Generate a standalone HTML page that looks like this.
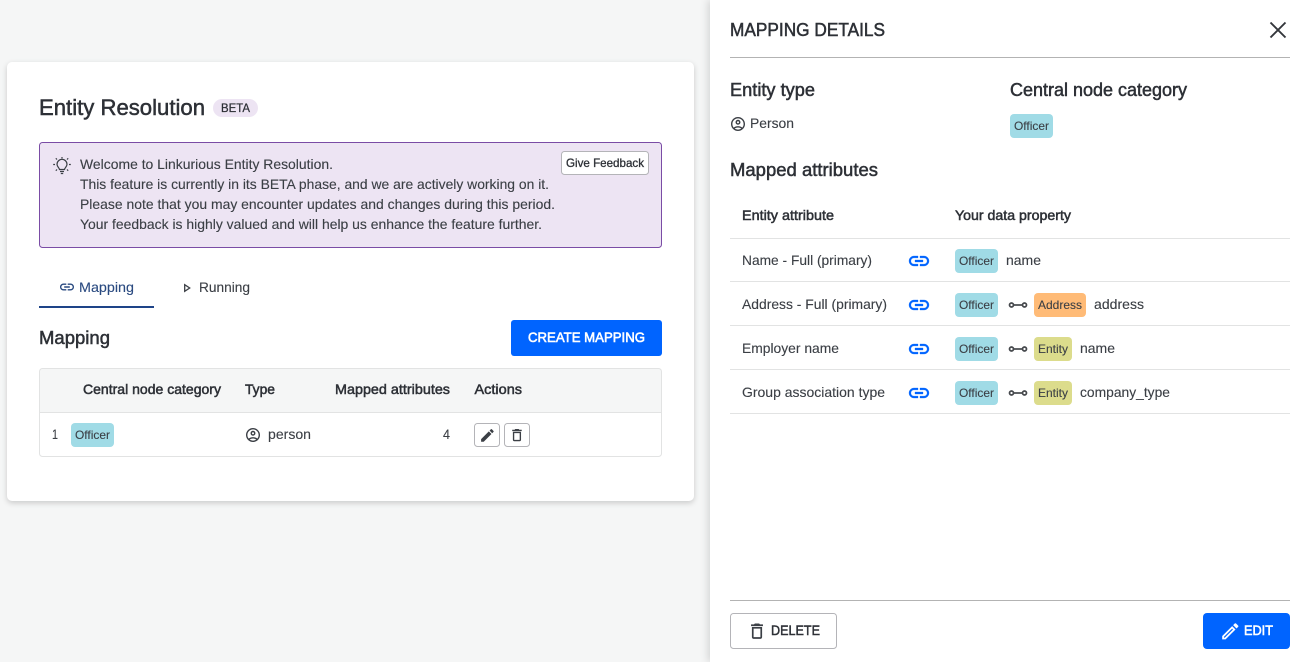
<!DOCTYPE html>
<html><head><meta charset="utf-8"><title>Entity Resolution</title>
<style>
html,body{margin:0;padding:0;width:1307px;height:662px;overflow:hidden;background:#f5f6f6}
#card{position:absolute;left:7px;top:62px;width:687px;height:439px;background:#fff;border-radius:5px;box-shadow:0 2px 6px rgba(0,0,0,.18)}
#panel{position:absolute;left:710px;top:0;width:597px;height:662px;background:#fff;box-shadow:-2px 0 8px rgba(0,0,0,.14)}
svg{position:absolute;left:0;top:0}
text{font-family:"Liberation Sans",sans-serif;font-size:14px;fill:#3b3f45;stroke:#3b3f45;stroke-width:.12px}
text.m{stroke:#2d3036;stroke-width:.5px;fill:#2d3036}
text.h{font-size:18px}
text.c{font-size:12px;fill:#3b3f45;stroke:#3b3f45;stroke-width:.1px}
text.w{fill:#fff;stroke:#fff;stroke-width:.6px}
</style></head><body>
<div id="card"></div><div id="panel"></div>
<svg width="1307" height="662" viewBox="0 0 1307 662" xmlns="http://www.w3.org/2000/svg">
<defs>
<path id="link" d="M3.9 12c0-1.71 1.39-3.1 3.1-3.1h4V7H7c-2.76 0-5 2.24-5 5s2.24 5 5 5h4v-1.9H7c-1.71 0-3.1-1.39-3.1-3.1zM8 13h8v-2H8v2zm9-6h-4v1.9h4c1.71 0 3.1 1.39 3.1 3.1s-1.39 3.1-3.1 3.1h-4V17h4c2.76 0 5-2.24 5-5s-2.24-5-5-5z"/>
<path id="person" d="M12 2C6.48 2 2 6.48 2 12s4.48 10 10 10 10-4.48 10-10S17.52 2 12 2zM7.35 18.5C8.66 17.56 10.26 17 12 17s3.34.56 4.65 1.5C15.34 19.44 13.74 20 12 20s-3.34-.56-4.65-1.5zm10.79-1.38C16.45 15.8 14.32 15 12 15s-4.45.8-6.14 2.12C4.7 15.73 4 13.95 4 12c0-4.42 3.58-8 8-8s8 3.58 8 8c0 1.95-.7 3.73-1.86 5.12zM12 6c-1.93 0-3.5 1.57-3.5 3.5S10.07 13 12 13s3.5-1.57 3.5-3.5S13.93 6 12 6zm0 5c-.83 0-1.5-.67-1.5-1.5S11.17 8 12 8s1.5.67 1.5 1.5S12.83 11 12 11z"/>
<path id="trash" d="M16 9v10H8V9h8m-1.5-6h-5l-1 1H5v2h14V4h-3.5l-1-1zM18 7H6v12c0 1.1.9 2 2 2h8c1.1 0 2-.9 2-2V7z"/>
<g id="conn" fill="none" stroke="#45484c" stroke-width="1.7"><circle cx="2.5" cy="0" r="2"/><circle cx="15.5" cy="0" r="2"/><path d="M4.5 0h9"/></g>
</defs>

<!-- Title -->
<text class="m" x="39" y="115" style="font-size:22px" textLength="166" lengthAdjust="spacingAndGlyphs">Entity Resolution</text>
<rect x="213" y="99" width="45" height="18" rx="9" fill="#ede4f3"/>
<text class="m" x="221" y="112" style="font-size:12px;stroke-width:.25px" textLength="29" lengthAdjust="spacingAndGlyphs">BETA</text>

<!-- Alert -->
<rect x="39.5" y="142.5" width="622" height="105" rx="3" fill="#ede4f3" stroke="#7a4ca5"/>
<g fill="none" stroke="#3b3f45" stroke-width="1.2">
<path d="M59.5 169.5c0-1.6-2.5-2.5-2.5-5.2a5 5 0 0 1 10 0c0 2.700-2.500 3.600-2.500 5.200z"/>
<path d="M60 171.500h4M60.800 173.500h2.400"/>
<path d="M62 157v1.500M55 164.500h-1.800M70.800 164.500H69M57 159.500l-1.200-1.200M67 159.500l1.200-1.200M57 169.500l-1.200 1.200M67 169.500l1.200 1.200"/>
</g>
<text x="80" y="169" textLength="253" lengthAdjust="spacingAndGlyphs">Welcome to Linkurious Entity Resolution.</text>
<text x="80" y="189" textLength="469" lengthAdjust="spacingAndGlyphs">This feature is currently in its BETA phase, and we are actively working on it.</text>
<text x="80" y="209" textLength="475" lengthAdjust="spacingAndGlyphs">Please note that you may encounter updates and changes during this period.</text>
<text x="80" y="229" textLength="462" lengthAdjust="spacingAndGlyphs">Your feedback is highly valued and will help us enhance the feature further.</text>
<rect x="561.5" y="151.5" width="87" height="23" rx="3" fill="#fff" stroke="#b4b4b8"/>
<text class="m" x="566" y="167" style="font-size:12px;stroke-width:.3px" textLength="78" lengthAdjust="spacingAndGlyphs">Give Feedback</text>

<!-- Tabs -->
<use href="#link" transform="translate(58.600 278.600) scale(.7)" fill="#2a4a80"/>
<text x="79" y="292" style="fill:#2a4a80;stroke:#2a4a80" textLength="55" lengthAdjust="spacingAndGlyphs">Mapping</text>
<rect x="39" y="306" width="115" height="2" fill="#1e4488"/>
<path d="M184.700 284.700v6.600l5-3.300z" fill="none" stroke="#3b3f45" stroke-width="1.300"/>
<text x="199" y="292" textLength="51" lengthAdjust="spacingAndGlyphs">Running</text>

<!-- Mapping section -->
<text class="m h" x="39" y="344" textLength="71" lengthAdjust="spacingAndGlyphs">Mapping</text>
<rect x="511" y="320" width="151" height="36" rx="3" fill="#0064ff"/>
<text class="w" x="528" y="342" textLength="117" lengthAdjust="spacingAndGlyphs">CREATE MAPPING</text>

<!-- Table -->
<path d="M42.500 368.500h616a3 3 0 0 1 3 3v41h-622v-41a3 3 0 0 1 3-3z" fill="#f5f6f6"/>
<rect x="39.500" y="368.500" width="622" height="88" rx="3" fill="none" stroke="#e2e3e3"/>
<path d="M39.500 412.500h622" stroke="#e2e3e3"/>
<text class="m" x="83" y="394" textLength="138" lengthAdjust="spacingAndGlyphs">Central node category</text>
<text class="m" x="245" y="394" textLength="30" lengthAdjust="spacingAndGlyphs">Type</text>
<text class="m" x="335" y="394" textLength="115" lengthAdjust="spacingAndGlyphs">Mapped attributes</text>
<text class="m" x="474.500" y="394" textLength="47.500" lengthAdjust="spacingAndGlyphs">Actions</text>
<text x="52" y="439" textLength="6" lengthAdjust="spacingAndGlyphs">1</text>
<rect x="71" y="423" width="43" height="24" rx="4" fill="#a0dbe6"/>
<text class="c" x="75" y="439" textLength="35" lengthAdjust="spacingAndGlyphs">Officer</text>
<use href="#person" transform="translate(244.600 426.600) scale(.7)" fill="#3b3f45"/>
<text x="268" y="439" textLength="43" lengthAdjust="spacingAndGlyphs">person</text>
<text x="443" y="439" textLength="7" lengthAdjust="spacingAndGlyphs">4</text>
<rect x="474.500" y="423.500" width="25" height="23" rx="3" fill="#fff" stroke="#b4b4b8"/>
<path transform="translate(479 427) scale(.7)" fill="#3b3f45" d="M3 17.250V21h3.750L17.810 9.940l-3.750-3.750L3 17.250zM20.710 7.040c.39-.39.39-1.020 0-1.410l-2.340-2.340c-.39-.39-1.020-.39-1.410 0l-1.830 1.830 3.750 3.750 1.830-1.830z"/>
<rect x="504.500" y="423.500" width="25" height="23" rx="3" fill="#fff" stroke="#b4b4b8"/>
<use href="#trash" transform="translate(508.800 427) scale(.68)" fill="#3b3f45"/>

<!-- Panel header -->
<text class="m h" x="730" y="36" textLength="155" lengthAdjust="spacingAndGlyphs">MAPPING DETAILS</text>
<path d="M1270.500 22.500l15 15M1285.500 22.500l-15 15" stroke="#33363b" stroke-width="1.900" fill="none"/>
<path d="M730 57.500h560" stroke="#b3b3b3"/>
<text class="m h" x="730" y="96" textLength="85" lengthAdjust="spacingAndGlyphs">Entity type</text>
<text class="m h" x="1010" y="96" textLength="177" lengthAdjust="spacingAndGlyphs">Central node category</text>
<use href="#person" transform="translate(729.600 115.600) scale(.7)" fill="#3b3f45"/>
<text x="750" y="128" textLength="44" lengthAdjust="spacingAndGlyphs">Person</text>
<rect x="1010" y="114" width="43" height="24" rx="4" fill="#a0dbe6"/>
<text class="c" x="1014" y="130" textLength="35" lengthAdjust="spacingAndGlyphs">Officer</text>
<text class="m h" x="730" y="176" textLength="148" lengthAdjust="spacingAndGlyphs">Mapped attributes</text>

<!-- Attributes table -->
<text class="m" x="742" y="220" textLength="92" lengthAdjust="spacingAndGlyphs">Entity attribute</text>
<text class="m" x="955" y="220" textLength="116" lengthAdjust="spacingAndGlyphs">Your data property</text>
<path d="M730 238.500h560M730 281.500h560M730 325.500h560M730 369.500h560M730 413.500h560" stroke="#e2e3e3"/>

<text x="742" y="265" textLength="130" lengthAdjust="spacingAndGlyphs">Name - Full (primary)</text>
<use href="#link" transform="translate(907 249)" fill="#0064ff" stroke="#0064ff" stroke-width=".3"/>
<rect x="955" y="249" width="43" height="24" rx="4" fill="#a0dbe6"/>
<text class="c" x="959" y="265" textLength="35" lengthAdjust="spacingAndGlyphs">Officer</text>
<text x="1006" y="265" textLength="35" lengthAdjust="spacingAndGlyphs">name</text>

<text x="742" y="309" textLength="145" lengthAdjust="spacingAndGlyphs">Address - Full (primary)</text>
<use href="#link" transform="translate(907 293)" fill="#0064ff" stroke="#0064ff" stroke-width=".3"/>
<rect x="955" y="293" width="43" height="24" rx="4" fill="#a0dbe6"/>
<text class="c" x="959" y="309" textLength="35" lengthAdjust="spacingAndGlyphs">Officer</text>
<use href="#conn" transform="translate(1009 305)"/>
<rect x="1034" y="293" width="52" height="24" rx="4" fill="#ffbb77"/>
<text class="c" x="1038" y="309" textLength="44" lengthAdjust="spacingAndGlyphs">Address</text>
<text x="1094" y="309" textLength="50" lengthAdjust="spacingAndGlyphs">address</text>

<text x="742" y="353" textLength="97" lengthAdjust="spacingAndGlyphs">Employer name</text>
<use href="#link" transform="translate(907 337)" fill="#0064ff" stroke="#0064ff" stroke-width=".3"/>
<rect x="955" y="337" width="43" height="24" rx="4" fill="#a0dbe6"/>
<text class="c" x="959" y="353" textLength="35" lengthAdjust="spacingAndGlyphs">Officer</text>
<use href="#conn" transform="translate(1009 349)"/>
<rect x="1034" y="337" width="38" height="24" rx="4" fill="#dcdc8c"/>
<text class="c" x="1038" y="353" textLength="30" lengthAdjust="spacingAndGlyphs">Entity</text>
<text x="1080" y="353" textLength="35" lengthAdjust="spacingAndGlyphs">name</text>

<text x="742" y="397" textLength="143" lengthAdjust="spacingAndGlyphs">Group association type</text>
<use href="#link" transform="translate(907 381)" fill="#0064ff" stroke="#0064ff" stroke-width=".3"/>
<rect x="955" y="381" width="43" height="24" rx="4" fill="#a0dbe6"/>
<text class="c" x="959" y="397" textLength="35" lengthAdjust="spacingAndGlyphs">Officer</text>
<use href="#conn" transform="translate(1009 393)"/>
<rect x="1034" y="381" width="38" height="24" rx="4" fill="#dcdc8c"/>
<text class="c" x="1038" y="397" textLength="30" lengthAdjust="spacingAndGlyphs">Entity</text>
<text x="1080" y="397" textLength="90" lengthAdjust="spacingAndGlyphs">company_type</text>

<!-- Footer -->
<path d="M730 600.500h560" stroke="#b3b3b3"/>
<rect x="730.500" y="613.500" width="106" height="35" rx="3" fill="#fff" stroke="#b4b4b8"/>
<use href="#trash" transform="translate(746.800 621) scale(.85)" fill="#3b3f45"/>
<text class="m" x="771" y="635" textLength="49" lengthAdjust="spacingAndGlyphs">DELETE</text>
<rect x="1203" y="613" width="87" height="36" rx="4" fill="#0064ff"/>
<path transform="translate(1219.500 620.500) scale(.9)" fill="#fff" d="M3 17.250V21h3.750L17.810 9.940l-3.750-3.750L3 17.250zM5.920 19H5v-.92l9.060-9.060.92.92L5.920 19zM20.710 5.630l-2.340-2.340c-.2-.2-.45-.29-.71-.29s-.51.1-.7.29l-1.830 1.830 3.750 3.750 1.830-1.830c.39-.39.39-1.020 0-1.410z"/>
<text class="w" x="1244" y="635" textLength="29" lengthAdjust="spacingAndGlyphs">EDIT</text>
</svg>
</body></html>
